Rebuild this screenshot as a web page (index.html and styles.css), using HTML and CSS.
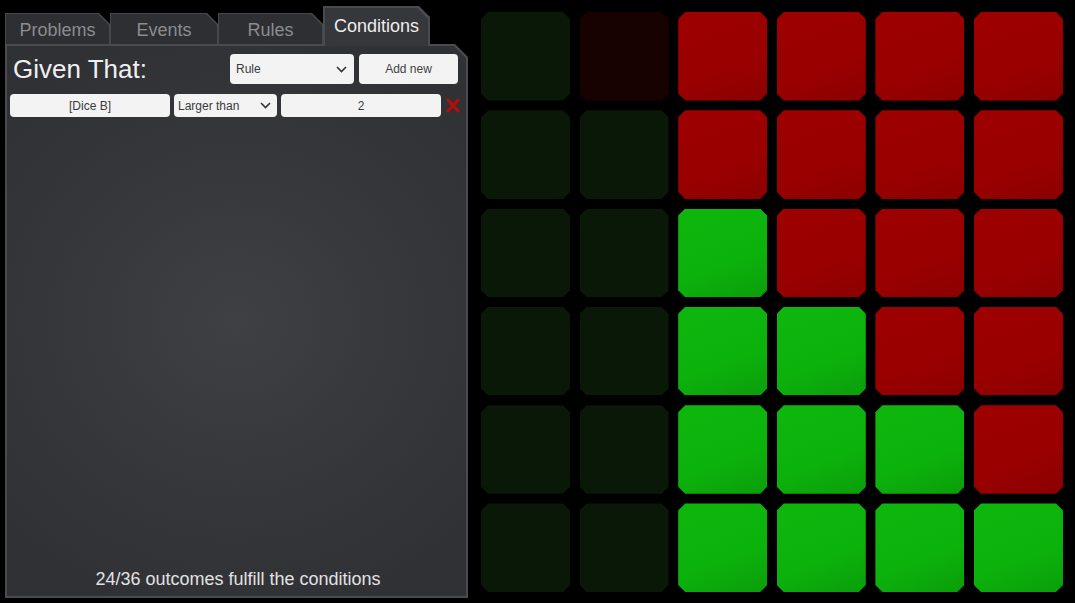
FILE: index.html
```html
<!DOCTYPE html>
<html>
<head>
<meta charset="utf-8">
<link rel="stylesheet" href="styles.css">
</head>
<body>
<div class="app">
  <div class="left">
    <div class="tabs">
      <div class="tab w105"><div class="tab-inner">Problems</div></div>
      <div class="tab w108"><div class="tab-inner">Events</div></div>
      <div class="tab w105"><div class="tab-inner">Rules</div></div>
      <div class="tab active w107"><div class="tab-inner">Conditions</div></div>
    </div>
    <div class="panel">
      <div class="panel-inner">
        <div class="head-row">
          <div class="title">Given That:</div>
          <div class="ctl select rule-select"><span>Rule</span>
            <svg class="chev" width="11" height="7" viewBox="0 0 11 7"><path d="M1 1 L5.5 5.5 L10 1" fill="none" stroke="#333" stroke-width="1.6"/></svg>
          </div>
          <div class="ctl button add-btn">Add new</div>
        </div>
        <div class="cond-row">
          <div class="ctl field w160">[Dice B]</div>
          <div class="ctl select op-select"><span>Larger than</span>
            <svg class="chev" width="11" height="7" viewBox="0 0 11 7"><path d="M1 1 L5.5 5.5 L10 1" fill="none" stroke="#333" stroke-width="1.6"/></svg>
          </div>
          <div class="ctl field w160">2</div>
          <svg class="remove" width="16" height="17" viewBox="0 0 16 17"><path d="M2 2 L14 15 M14 2 L2 15" stroke="#b50c0c" stroke-width="3.2" stroke-linecap="butt"/></svg>
        </div>
        <div class="spacer"></div>
        <div class="summary">24/36 outcomes fulfill the conditions</div>
      </div>
    </div>
  </div>
  <div class="grid">
    <div class="tile dg"></div><div class="tile dr"></div><div class="tile r"></div><div class="tile r"></div><div class="tile r"></div><div class="tile r"></div>
    <div class="tile dg"></div><div class="tile dg"></div><div class="tile r"></div><div class="tile r"></div><div class="tile r"></div><div class="tile r"></div>
    <div class="tile dg"></div><div class="tile dg"></div><div class="tile g"></div><div class="tile r"></div><div class="tile r"></div><div class="tile r"></div>
    <div class="tile dg"></div><div class="tile dg"></div><div class="tile g"></div><div class="tile g"></div><div class="tile r"></div><div class="tile r"></div>
    <div class="tile dg"></div><div class="tile dg"></div><div class="tile g"></div><div class="tile g"></div><div class="tile g"></div><div class="tile r"></div>
    <div class="tile dg"></div><div class="tile dg"></div><div class="tile g"></div><div class="tile g"></div><div class="tile g"></div><div class="tile g"></div>
  </div>
</div>
</body>
</html>
```
FILE: styles.css
```css
html, body {
  margin: 0;
  padding: 0;
  background: #000;
  width: 1075px;
  height: 603px;
  overflow: hidden;
  font-family: "Liberation Sans", Arial, sans-serif;
}
.app {
  display: flex;
  height: 603px;
}
.left {
  width: 465px;
  padding-left: 5px;
  display: flex;
  flex-direction: column;
}
.tabs {
  height: 44px;
  display: flex;
  align-items: flex-end;
  position: relative;
  z-index: 2;
}
.tab {
  height: 31px;
  box-sizing: border-box;
  padding: 1px 1px 0 1px;
  background: #47484c;
  clip-path: polygon(0 0, calc(100% - 11px) 0, 100% 11px, 100% 100%, 0 100%);
}
.tab-inner {
  height: 100%;
  background: #2e2f33;
  clip-path: polygon(0 0, calc(100% - 11px) 0, 100% 11px, 100% 100%, 0 100%);
  color: #8b8c8f;
  font-size: 18px;
  display: flex;
  align-items: center;
  justify-content: center;
  padding-top: 3px;
  box-sizing: border-box;
}
.w105 { width: 105px; }
.w107 { width: 107px; }
.w108 { width: 108px; }
.tab.active {
  height: 40px;
  margin-bottom: -2px;
  background: #4a4b4f;
  padding: 2px 2px 0 2px;
}
.tab.active .tab-inner {
  background: #36373b;
  color: #ededed;
  padding-top: 0;
  padding-bottom: 2px;
}
.panel {
  width: 463px;
  height: 554px;
  background: #4a4b4f;
  padding: 2px;
  box-sizing: border-box;
  clip-path: polygon(0 0, calc(100% - 13px) 0, 100% 13px, 100% 100%, 0 100%);
}
.panel-inner {
  height: 100%;
  box-sizing: border-box;
  clip-path: polygon(0 0, calc(100% - 12px) 0, 100% 12px, 100% 100%, 0 100%);
  background: radial-gradient(ellipse 70% 55% at 50% 50%, #3f4044 0%, #36373b 55%, #303135 100%);
  padding: 8px 5px 7px 3px;
  display: flex;
  flex-direction: column;
}
.head-row {
  display: flex;
  align-items: center;
  height: 30px;
  margin-right: 3px;
}
.title {
  color: #f0f0f0;
  font-size: 26px;
  margin-left: 3px;
  flex: 1;
  padding-top: 1px;
}
.ctl {
  background: #f3f3f3;
  border-radius: 4px;
  color: #3a3a3a;
  font-size: 12px;
  box-sizing: border-box;
  display: flex;
  align-items: center;
  flex-shrink: 0;
}
.rule-select {
  width: 124px;
  height: 30px;
  padding: 0 7px 0 6px;
  justify-content: space-between;
}
.add-btn {
  width: 99px;
  height: 30px;
  margin-left: 5px;
  justify-content: center;
  color: #444;
}
.chev {
  display: block;
}
.cond-row {
  display: flex;
  align-items: center;
  height: 23px;
  margin-top: 10px;
  gap: 4px;
}
.field {
  height: 23px;
  justify-content: center;
}
.w160 { width: 160px; }
.op-select {
  width: 103px;
  height: 23px;
  padding: 0 6px 0 4px;
  justify-content: space-between;
}
.remove {
  display: block;
  flex-shrink: 0;
}
.spacer {
  flex: 1;
}
.summary {
  color: #e2e2e2;
  font-size: 18px;
  line-height: 20px;
  text-align: center;
  padding-left: 5px;
}
.grid {
  margin-left: 11px;
  padding-top: 12px;
  display: grid;
  grid-template-columns: repeat(6, 89px);
  grid-auto-rows: 88.6px;
  gap: 9.7px 9.6px;
  align-content: start;
}
.tile {
  clip-path: polygon(7px 0, calc(100% - 7px) 0, 100% 7px, 100% calc(100% - 7px), calc(100% - 7px) 100%, 7px 100%, 0 calc(100% - 7px), 0 7px);
}
.tile.r {
  background: linear-gradient(160deg, #9d0000 0%, #9a0000 60%, #8c0000 100%);
}
.tile.g {
  background: linear-gradient(160deg, #0db60d 0%, #0cb20c 60%, #0a9e0a 100%);
}
.tile.dg {
  background: #0a1807;
}
.tile.dr {
  background: #170101;
}
```
